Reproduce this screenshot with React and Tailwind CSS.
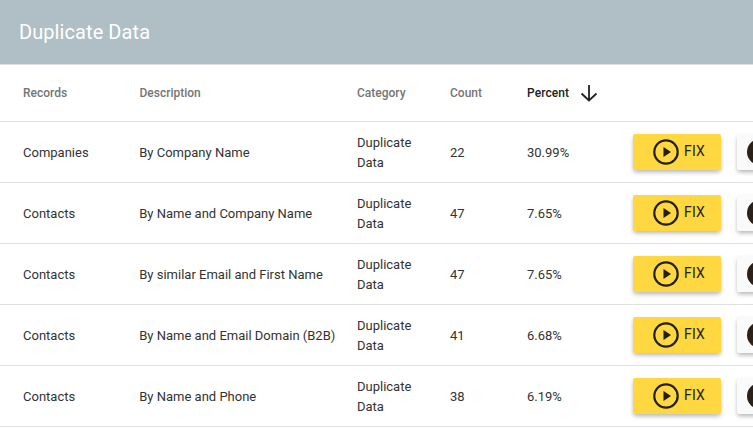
import React from "react";

const rows = [
  { record: "Companies", description: "By Company Name", count: "22", percent: "30.99%" },
  { record: "Contacts", description: "By Name and Company Name", count: "47", percent: "7.65%" },
  { record: "Contacts", description: "By similar Email and First Name", count: "47", percent: "7.65%" },
  { record: "Contacts", description: "By Name and Email Domain (B2B)", count: "41", percent: "6.68%" },
  { record: "Contacts", description: "By Name and Phone", count: "38", percent: "6.19%" },
];

const PlayCircle = () => (
  <svg width="26" height="26" viewBox="0 0 26 26" className="shrink-0">
    <circle cx="13" cy="13" r="11.7" fill="none" stroke="#231f10" strokeWidth="2.2" />
    <path d="M10.5 8 L18 13 L10.5 18 Z" fill="#231f10" />
  </svg>
);

const App = () => {
  return (
    <div className="w-[753px] h-[429px] overflow-hidden bg-white font-['Roboto',sans-serif]">
      <header className="h-[65px] bg-[#b0bec5] flex items-center pl-[19px] border-b border-[#e0e0e0]">
        <h1 className="text-[20px] font-normal tracking-[0.08px] text-white leading-none">Duplicate Data</h1>
      </header>

      <div className="w-[860px]">
        <div className="h-[57px] flex items-center border-b border-[#e0e0e0] text-[12px] font-medium text-[#757575]">
          <div className="w-[139px] pl-[23px]">Records</div>
          <div className="w-[218px] pl-[0.5px]">Description</div>
          <div className="w-[93px]">Category</div>
          <div className="w-[77px]">Count</div>
          <div className="flex items-center text-[#212121] tracking-[0.1px]">
            Percent
            <svg width="18" height="18" viewBox="0 0 18 18" className="ml-[11px]">
              <path d="M9 1 V16.5 M1.5 9.5 L9 16.5 L16.5 9.5" fill="none" stroke="#212121" strokeWidth="1.8" />
            </svg>
          </div>
        </div>

        {rows.map((row, i) => (
          <div key={i} className="h-[61px] flex items-center border-b border-[#e0e0e0] text-[13px] text-[#333333]">
            <div className="w-[139px] pl-[23px] pt-[2px]">{row.record}</div>
            <div className="w-[218px] pl-[0.25px] pt-[2px]">{row.description}</div>
            <div className="w-[93px] pt-[2px] leading-[20px]">
              Duplicate
              <br />
              Data
            </div>
            <div className="w-[77px] pt-[2px]">{row.count}</div>
            <div className="w-[106px] pt-[2px]">{row.percent}</div>
            <button className="w-[88px] h-[36px] rounded-[2px] bg-[#ffd740] flex items-center pl-[20px] gap-[5px] text-[14px] font-normal tracking-[0.2px] text-[#231f10] shadow-[0_3px_5px_-1px_rgba(0,0,0,0.2),0_2px_4px_rgba(0,0,0,0.12)]">
              <PlayCircle />
              <span className="-mt-[2px]">FIX</span>
            </button>
            <button className="ml-[16px] w-[88px] h-[36px] rounded-[2px] bg-[#fafafa] flex items-center pl-[10px] shadow-[0_3px_5px_-1px_rgba(0,0,0,0.2),0_2px_4px_rgba(0,0,0,0.12)]">
              <span className="w-[26px] h-[26px] rounded-full bg-[#2b2118]" />
            </button>
          </div>
        ))}
      </div>
    </div>
  );
};

export default App;
